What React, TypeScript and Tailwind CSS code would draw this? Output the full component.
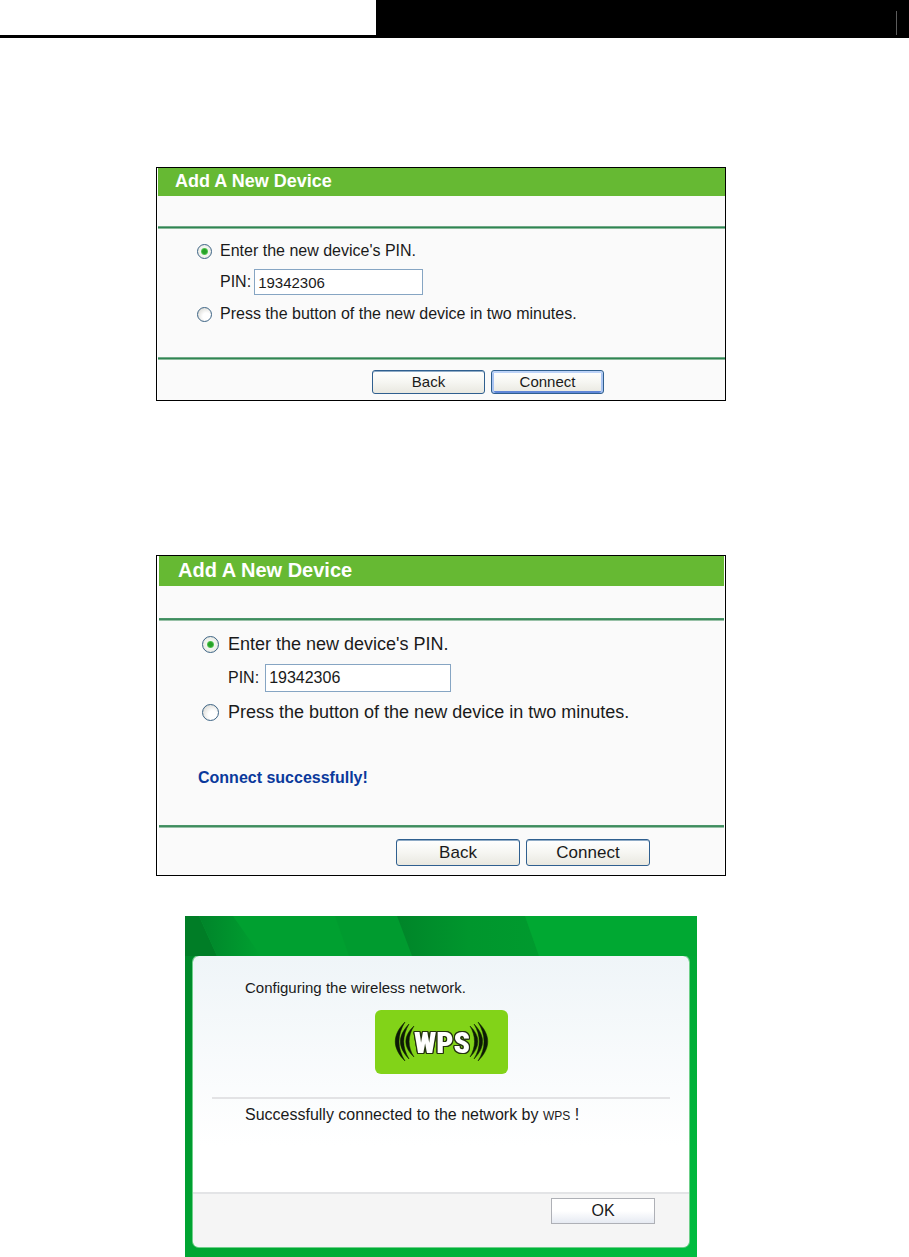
import { useId } from "react";
import type { ReactNode } from "react";
import clsx from "clsx";

type Size = "md" | "lg";

const radioClass =
  "shrink-0 appearance-none rounded-full border border-[#3d6485] bg-[radial-gradient(circle_at_65%_65%,#ffffff_30%,#cfcec8_100%)] checked:bg-[radial-gradient(circle,#27a127_0_2px,#4fc34f_3px,#f3f5f0_4px,#e4e4de_100%)]";

function Rule({ size }: { size: Size }) {
  return (
    <hr
      className={clsx(
        "h-[3px] border-0 bg-linear-to-b",
        size === "lg" ? "from-[#4f9a6d] via-[#3f8c5f] to-[#c3dccd]" : "from-[#8fbea2] via-[#2f8553] to-[#b5d5c1]",
      )}
    />
  );
}

function XpButton({ size, focused, children }: { size: Size; focused?: boolean; children: ReactNode }) {
  return (
    <button
      type="button"
      className={clsx(
        "rounded-[3px] border border-[#2f5f8f] bg-linear-to-b from-white via-[#f6f6f2] to-[#e9e8e0] text-[#1a1a1a]",
        size === "lg"
          ? "h-[27px] w-[124px] text-[17px] leading-6"
          : "h-6 w-[113px] text-[15px] leading-5",
        focused
          ? "shadow-[inset_0_2px_0_#bcd2f7,inset_2px_0_0_#a9c4f2,inset_-2px_0_0_#a9c4f2,inset_0_-2px_0_#5f86d8]"
          : "shadow-[inset_0_1px_0_#8fabc6]",
      )}
    >
      {children}
    </button>
  );
}

function DevicePanel({ size, focused, message }: { size: Size; focused?: boolean; message?: string }) {
  const id = useId();
  const lg = size === "lg";

  return (
    <section className={clsx("w-full max-w-[570px] border border-black bg-white", lg ? "pr-px pl-[2px]" : "pl-px")}>
      <div className="bg-[#fafafa]">
        <h2
          className={clsx(
            "bg-[#66b933] font-bold text-white",
            lg ? "h-[30px] pl-[19px] text-xl leading-7" : "h-7 pl-[17px] text-lg leading-[26px]",
          )}
        >
          Add A New Device
        </h2>
        <div className={lg ? "h-8" : "h-[30px]"} />
        <Rule size={size} />

        <form className={lg ? "h-[204px] pt-[11px] pl-[39px] text-lg" : "h-32 pt-[10px] pl-[39px] text-base"}>
          <div className={clsx("flex items-center leading-6", lg ? "gap-[9px] pl-1" : "gap-2")}>
            <input
              type="radio"
              id={`${id}-pin`}
              name={`${id}-mode`}
              defaultChecked
              className={clsx(radioClass, lg ? "size-[17px]" : "size-[15px]")}
            />
            <label htmlFor={`${id}-pin`}>Enter the new device's PIN.</label>
          </div>
          <div
            className={clsx(
              "flex items-center text-base",
              lg ? "my-2 gap-[6px] pl-[30px]" : "mt-[6px] mb-[7px] gap-[3px] pl-[23px]",
            )}
          >
            <label htmlFor={`${id}-value`}>PIN:</label>
            <input
              type="text"
              id={`${id}-value`}
              defaultValue="19342306"
              className={clsx(
                "border border-[#86a5c3] bg-white px-[3px]",
                lg ? "h-7 w-[186px] text-base" : "h-[26px] w-[169px] text-[15px]",
              )}
            />
          </div>
          <div className={clsx("flex items-center leading-6", lg ? "gap-[9px] pl-1" : "gap-2")}>
            <input
              type="radio"
              id={`${id}-push`}
              name={`${id}-mode`}
              className={clsx(radioClass, lg ? "size-[17px]" : "size-[15px]")}
            />
            <label htmlFor={`${id}-push`}>Press the button of the new device in two minutes.</label>
          </div>
          {message && <p className="mt-[42px] text-base leading-6 font-bold text-[#0a399c]">{message}</p>}
        </form>

        <Rule size={size} />
        <div
          className={clsx(
            "flex justify-end gap-[6px]",
            lg ? "pt-[11px] pr-[74px] pb-[9px]" : "pt-[10px] pr-[121px] pb-[6px]",
          )}
        >
          <XpButton size={size}>Back</XpButton>
          <XpButton size={size} focused={focused}>
            Connect
          </XpButton>
        </div>
      </div>
    </section>
  );
}

function WpsLogo() {
  return (
    <svg viewBox="0 0 133 64" className="h-16 w-[133px]" role="img" aria-label="WPS">
      <rect width="133" height="64" rx="6" fill="#82d318" />
      <g fill="#0c1a04" stroke="#0c1a04" strokeWidth="0.5" strokeLinejoin="round">
        <path d="M30 12C17 25 17 38 30 51C22 38 22 25 30 12Z" />
        <path d="M34 14C22.500 26 22.500 37 34 49C27 37 27 26 34 14Z" />
        <path d="M39 16C28 26 28 37 39 47C32.500 37 32.500 26 39 16Z" />
        <path d="M103 12C116 25 116 38 103 51C111 38 111 25 103 12Z" />
        <path d="M99 14C110.500 26 110.500 37 99 49C106 37 106 26 99 14Z" />
        <path d="M95 16C105.500 26 105.500 37 95 47C101 37 101 26 95 16Z" />
      </g>
      <text
        x="67"
        y="43"
        textAnchor="middle"
        fill="#fff"
        className="font-['Roboto_Condensed','Open_Sans_Condensed',Roboto,sans-serif] text-[30px] font-black [filter:drop-shadow(1px_0_0_#24330f)_drop-shadow(-1px_0_0_#24330f)_drop-shadow(0_1px_0_#24330f)_drop-shadow(0_-1px_0_#24330f)]"
      >
        WPS
      </text>
    </svg>
  );
}

function WpsDialog() {
  return (
    <section className="relative w-full max-w-[512px] bg-linear-to-br from-[#008529] via-[#00a632] to-[#00bd40] px-2 pt-10 pb-[10px]">
      <svg viewBox="0 0 512 40" preserveAspectRatio="none" className="absolute inset-x-0 top-0 h-10 w-full" aria-hidden="true">
        <defs>
          <linearGradient id="beam" x1="0" x2="1">
            <stop offset="0" stopColor="#00842a" />
            <stop offset="1" stopColor="#00a030" />
          </linearGradient>
          <linearGradient id="beamDark" x1="0" x2="1">
            <stop offset="0" stopColor="#008529" />
            <stop offset="0.5" stopColor="#00962d" />
            <stop offset="1" stopColor="#009a2e" />
          </linearGradient>
        </defs>
        <rect width="512" height="40" fill="#00a030" />
        <path d="M0 0H14L32 40H0Z" fill="#007d26" />
        <path d="M14 0H48L76 40H32Z" fill="url(#beam)" />
        <path d="M150 0H212L227 40H164Z" fill="#009b2f" />
        <path d="M212 0H340L354 40H227Z" fill="url(#beamDark)" />
        <path d="M340 0H512V40H354Z" fill="#00a832" />
      </svg>

      <div className="overflow-hidden rounded-md bg-linear-to-b from-[#eff5f8] to-white to-65% ring-1 ring-[#6fd08a]">
        <div className="h-[236px] px-[19px] pt-5">
          <p className="pl-[33px] text-[15px] leading-6">Configuring the wireless network.</p>
          <div className="flex justify-center pt-[10px] pb-[23px]">
            <WpsLogo />
          </div>
          <hr className="border-t-2 border-[#e3e3e5]" />
          <p className="pt-1 pl-[33px] text-base leading-6">
            Successfully connected to the network by <span className="text-xs">WPS</span> !
          </p>
        </div>
        <div className="flex h-[55px] justify-end border-t-2 border-[#e3e4e6] bg-[#f5f5f5] pt-1 pr-[34px]">
          <button
            type="button"
            className="h-[26px] w-[104px] border border-[#aeb0b6] bg-linear-to-b from-white from-50% to-[#e6eaf2] text-base leading-6"
          >
            OK
          </button>
        </div>
      </div>
    </section>
  );
}

export default function App() {
  return (
    <div className="min-h-screen bg-white font-['Liberation_Sans',Arial,sans-serif] text-[#1a1a1a]">
      <header className="flex h-[38px] border-b-[3px] border-black">
        <div className="w-[376px]" />
        <div className="flex flex-1 items-end justify-end bg-black pr-3">
          <div className="h-6 w-px bg-[#5c5c5c]" />
        </div>
      </header>

      <main className="flex flex-col items-center pt-[129px] pr-[27px]">
        <DevicePanel size="md" focused />
        <div className="h-[154px]" />
        <DevicePanel size="lg" message="Connect successfully!" />
        <div className="h-10" />
        <WpsDialog />
      </main>
    </div>
  );
}
